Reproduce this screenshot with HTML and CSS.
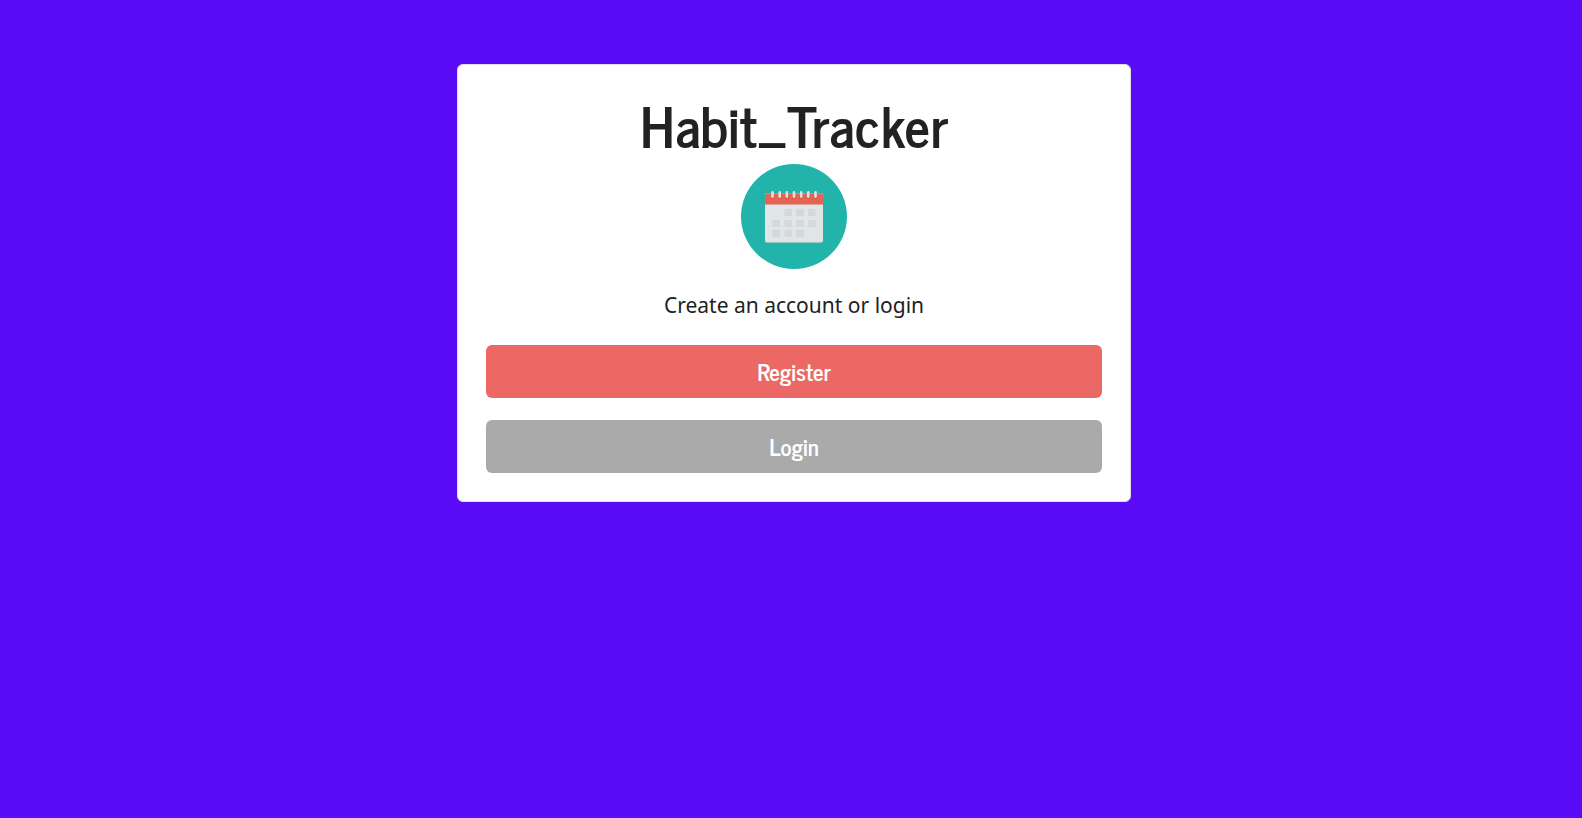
FILE: index.html
```html
<!DOCTYPE html>
<html lang="en">
<head>
<meta charset="utf-8">
<meta name="viewport" content="width=device-width, initial-scale=1">
<title>Habit_Tracker</title>
<link rel="stylesheet" href="styles.css">
</head>
<body>
<main class="page">
  <section class="card">
    <h1 class="title">Habit_Tracker</h1>
    <svg class="logo" viewBox="11 8 106 106" preserveAspectRatio="none" role="img" aria-label="Calendar">
      <circle cx="64" cy="61" r="53" fill="#22b3ab"/>
      <rect x="35" y="37.500" width="58" height="50" rx="2" fill="#c9cfd2"/>
      <rect x="35" y="37.500" width="58" height="49" rx="2" fill="#e0e5e8"/>
      <path d="M35 49V39.500a2 2 0 0 1 2-2H91a2 2 0 0 1 2 2V49Z" fill="#e56353"/>
      <g fill="#b94f43">
        <circle cx="42.500" cy="41.500" r="1.600"/><circle cx="49.700" cy="41.500" r="1.600"/><circle cx="56.800" cy="41.500" r="1.600"/><circle cx="64" cy="41.500" r="1.600"/><circle cx="71.200" cy="41.500" r="1.600"/><circle cx="78.300" cy="41.500" r="1.600"/><circle cx="85.500" cy="41.500" r="1.600"/>
      </g>
      <path d="M42.500 36.500v4.500M49.700 36.500v4.500M56.800 36.500v4.500M64 36.500v4.500M71.200 36.500v4.500M78.300 36.500v4.500M85.500 36.500v4.500" stroke="#dce1e4" stroke-width="2.600" stroke-linecap="round"/>
      <path d="M54.500 53.500h7.500v7h-7.500zM66.300 53.500h7.500v7h-7.500zM78 53.500h7.500v7h-7.500zM42.500 64.500h7.500v7h-7.500zM54.500 64.500h7.500v7h-7.500zM66.300 64.500h7.500v7h-7.500zM78 64.500h7.500v7h-7.500zM42.500 74.500h7.500v7h-7.500zM54.500 74.500h7.500v7h-7.500zM66.300 74.500h7.500v7h-7.500z" fill="#d4d7db"/>
    </svg>
    <p class="lead">Create an account or login</p>
    <div class="actions">
      <a class="button register" href="#register">Register</a>
      <a class="button login" href="#login">Login</a>
    </div>
  </section>
</main>
</body>
</html>
```
FILE: styles.css
```css
* { box-sizing: border-box; }

body {
  margin: 0;
  min-height: 100vh;
  background: #5a0cf6;
  color: #222;
  font-family: "Noto Sans", "Open Sans", sans-serif;
}

.page {
  display: flex;
  justify-content: center;
  padding: 64px 0 64px 6px;
}

.card {
  display: flex;
  flex-direction: column;
  align-items: center;
  width: 100%;
  max-width: 674px;
  padding: 28px;
  border: 1px solid #dfdfdf;
  border-radius: 6px;
  background: #fff;
}

.title,
.button {
  font-family: "News Cycle", "Liberation Sans Narrow", "Arial Narrow", sans-serif;
  font-weight: 700;
}

.title {
  margin: 0 0 9px;
  font-size: 56px;
  line-height: 62px;
}

.logo {
  width: 106px;
  height: 105px;
}

.lead {
  margin: 20px 0 24px;
  font-size: 21px;
  line-height: 32px;
}

.actions {
  display: flex;
  flex-direction: column;
  gap: 22px;
  width: 100%;
}

.button {
  padding: 10px 16px;
  border-radius: 6px;
  color: #fff;
  font-size: 23px;
  line-height: 33px;
  text-align: center;
  text-decoration: none;
}

.register { background: #eb6864; }

.login { background: #aaa; }
```
